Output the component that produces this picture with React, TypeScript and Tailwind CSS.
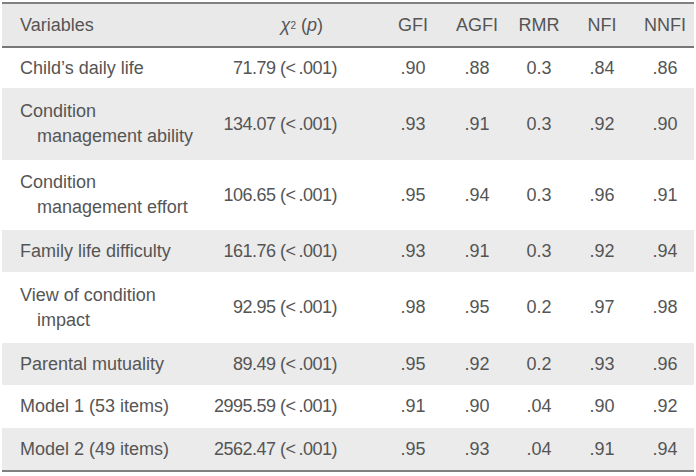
import React from 'react'

type Row = {
  label: string[]
  chi: string
  gfi: string
  agfi: string
  rmr: string
  nfi: string
  nnfi: string
  height: string
  shaded: boolean
}

const ROWS: Row[] = [
  { label: ['Child’s daily life'], chi: '71.79', gfi: '.90', agfi: '.88', rmr: '0.3', nfi: '.84', nnfi: '.86', height: 'h-[40px]', shaded: false },
  { label: ['Condition', 'management ability'], chi: '134.07', gfi: '.93', agfi: '.91', rmr: '0.3', nfi: '.92', nnfi: '.90', height: 'h-[72px]', shaded: true },
  { label: ['Condition', 'management effort'], chi: '106.65', gfi: '.95', agfi: '.94', rmr: '0.3', nfi: '.96', nnfi: '.91', height: 'h-[70px]', shaded: false },
  { label: ['Family life difficulty'], chi: '161.76', gfi: '.93', agfi: '.91', rmr: '0.3', nfi: '.92', nnfi: '.94', height: 'h-[42px]', shaded: true },
  { label: ['View of condition', 'impact'], chi: '92.95', gfi: '.98', agfi: '.95', rmr: '0.2', nfi: '.97', nnfi: '.98', height: 'h-[71px]', shaded: false },
  { label: ['Parental mutuality'], chi: '89.49', gfi: '.95', agfi: '.92', rmr: '0.2', nfi: '.93', nnfi: '.96', height: 'h-[42px]', shaded: true },
  { label: ['Model 1 (53 items)'], chi: '2995.59', gfi: '.91', agfi: '.90', rmr: '.04', nfi: '.90', nnfi: '.92', height: 'h-[43px]', shaded: false },
  { label: ['Model 2 (49 items)'], chi: '2562.47', gfi: '.95', agfi: '.93', rmr: '.04', nfi: '.91', nnfi: '.94', height: 'h-[42px]', shaded: true },
]

const GRID = 'grid grid-cols-[210px_170px_62px_66px_58px_68px_58px] items-center'

export default function App() {
  return (
    <div className="w-[696px] h-[476px] bg-white pt-[2px] pl-[2px] font-['Liberation_Sans',Arial,sans-serif] text-[18px] leading-[25px] text-[#555555]">
      <div className="w-[692px] border-t-2 border-b-2 border-[#808080]">
        {/* Header */}
        <div className={`${GRID} h-[44px] bg-[#e9e9e9] border-b-2 border-[#777777]`}>
          <div className="pl-[18px]">Variables</div>
          <div className="text-right pr-[59px]">
            <i>χ</i>
            <sup className="text-[10px] relative -top-[2px]">2</sup> (<i>p</i>)
          </div>
          <div className="text-center">GFI</div>
          <div className="text-center">AGFI</div>
          <div className="text-center">RMR</div>
          <div className="text-center">NFI</div>
          <div className="text-center">NNFI</div>
        </div>

        {/* Rows */}
        {ROWS.map((row) => (
          <div
            key={row.label.join(' ')}
            className={`${GRID} ${row.height} ${row.shaded ? 'bg-[#ebebeb]' : 'bg-white'}`}
          >
            <div className="pl-[18px]">
              {row.label.map((line, i) => (
                <div key={line} className={i > 0 ? 'pl-[17px]' : ''}>
                  {line}
                </div>
              ))}
            </div>
            <div className="text-right pr-[45px] whitespace-nowrap tracking-[-0.5px]">
              {row.chi} (&lt;<span className="ml-[3px]">.001)</span>
            </div>
            <div className="text-center">{row.gfi}</div>
            <div className="text-center">{row.agfi}</div>
            <div className="text-center">{row.rmr}</div>
            <div className="text-center">{row.nfi}</div>
            <div className="text-center">{row.nnfi}</div>
          </div>
        ))}
      </div>
    </div>
  )
}
